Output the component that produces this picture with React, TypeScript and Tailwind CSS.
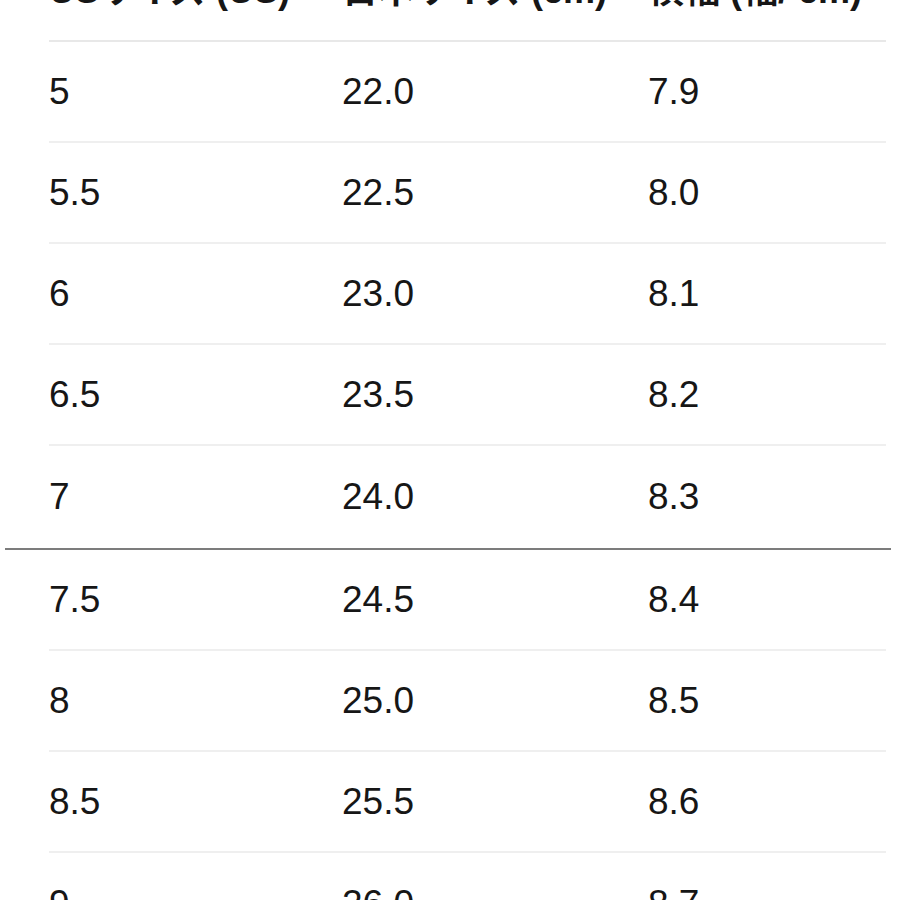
const rows = [
  ["5", "22.0", "7.9"],
  ["5.5", "22.5", "8.0"],
  ["6", "23.0", "8.1"],
  ["6.5", "23.5", "8.2"],
  ["7", "24.0", "8.3"],
  ["7.5", "24.5", "8.4"],
  ["8", "25.0", "8.5"],
  ["8.5", "25.5", "8.6"],
  ["9", "26.0", "8.7"],
];

const App = () => {
  return (
    <div className="w-[900px] h-[900px] overflow-hidden bg-white">
      <div
        className="mt-[-59px] pl-[49px] pr-[14px] text-[#161616]"
        style={{ fontFamily: '"Liberation Sans", "Noto Sans CJK JP", sans-serif' }}
      >
        <div className="grid grid-cols-[293px_306px_1fr] h-[101px] items-center border-b-2 border-[#e8e8e8] text-[36px] font-bold">
          <div>USサイズ (US)</div>
          <div>日本サイズ (cm)</div>
          <div>横幅 (幅/ cm)</div>
        </div>
        {rows.map((row, index) => (
          <div key={row[0]}>
            <div
              className={
                index === 4 || index === rows.length - 1
                  ? "grid grid-cols-[293px_306px_1fr] h-[102px] items-center text-[37px]"
                  : "grid grid-cols-[293px_306px_1fr] h-[101px] items-center border-b-2 border-[#efefef] text-[37px]"
              }
            >
              <div>{row[0]}</div>
              <div>{row[1]}</div>
              <div>{row[2]}</div>
            </div>
            {index === 4 && <div className="-ml-[44px] -mr-[5px] h-[2px] bg-[#7c7c7c]" />}
          </div>
        ))}
      </div>
    </div>
  );
};

export default App;
